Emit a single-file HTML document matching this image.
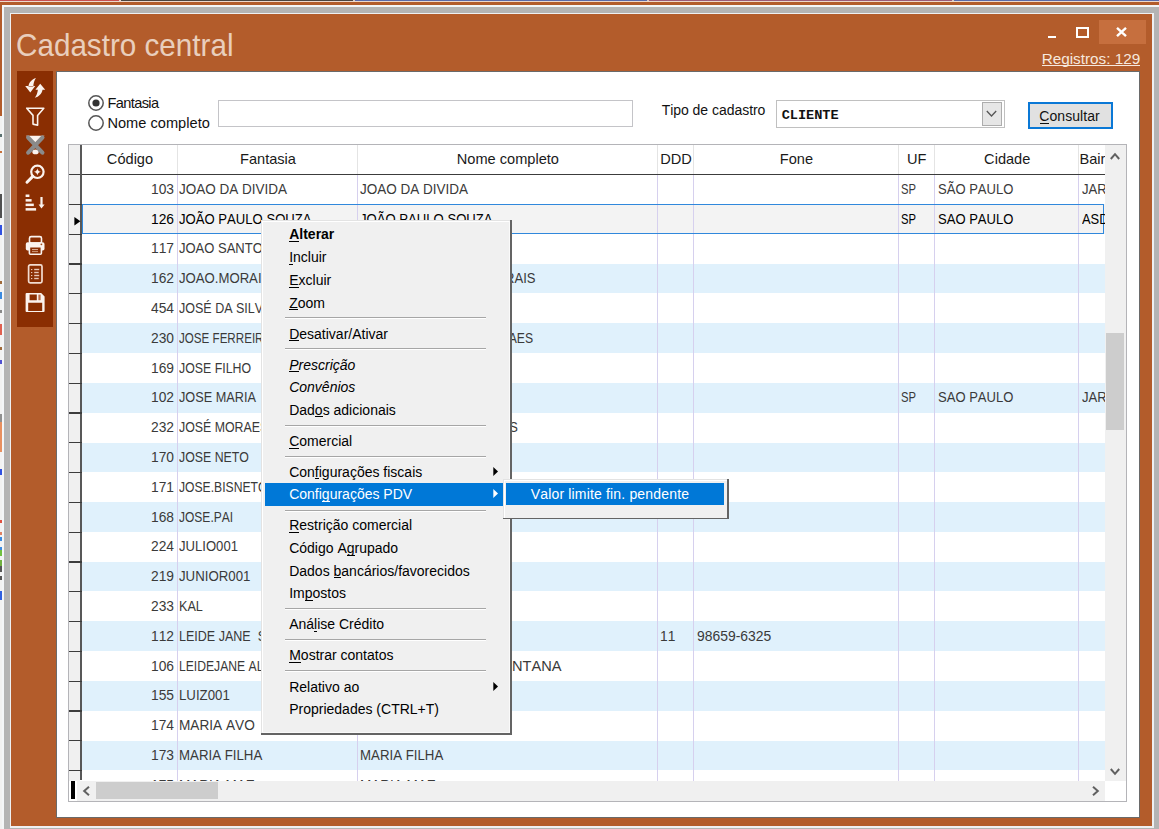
<!DOCTYPE html><html><head><meta charset="utf-8"><style>
html,body{margin:0;padding:0;}
body{width:1159px;height:829px;overflow:hidden;position:relative;background:#b35c2b;font-family:"Liberation Sans",sans-serif;}
.t{position:absolute;white-space:pre;font-kerning:none;}
.r{position:absolute;box-sizing:border-box;}
svg{position:absolute;overflow:visible;}
</style></head><body>
<div class="r" style="left:0.00px;top:0.00px;width:119.00px;height:1.00px;background:#c84f50;"></div>
<div class="r" style="left:119.00px;top:0.00px;width:2.00px;height:1.00px;background:#e8d0c8;"></div>
<div class="r" style="left:121.00px;top:0.00px;width:232.00px;height:1.00px;background:#4a4440;"></div>
<div class="r" style="left:353.00px;top:0.00px;width:2.00px;height:1.00px;background:#d8c8c0;"></div>
<div class="r" style="left:355.00px;top:0.00px;width:292.00px;height:1.00px;background:#5a6aa8;"></div>
<div class="r" style="left:647.00px;top:0.00px;width:2.00px;height:1.00px;background:#d8c8c0;"></div>
<div class="r" style="left:649.00px;top:0.00px;width:303.00px;height:1.00px;background:#9a5a78;"></div>
<div class="r" style="left:952.00px;top:0.00px;width:2.00px;height:1.00px;background:#d8c8c0;"></div>
<div class="r" style="left:954.00px;top:0.00px;width:205.00px;height:1.00px;background:#5a6aa8;"></div>
<div class="r" style="left:0.00px;top:1.00px;width:1159.00px;height:1.00px;background:#eed8cc;"></div>
<div class="r" style="left:0.00px;top:116.00px;width:2.20px;height:713.00px;background:#f2f2f2;"></div>
<div class="r" style="left:0.00px;top:134.00px;width:1.80px;height:3.00px;background:#5a7070;"></div>
<div class="r" style="left:0.00px;top:151.00px;width:1.80px;height:2.00px;background:#c8703a;"></div>
<div class="r" style="left:0.00px;top:194.00px;width:1.80px;height:24.00px;background:#505050;"></div>
<div class="r" style="left:0.00px;top:225.00px;width:1.80px;height:10.00px;background:#3050e0;"></div>
<div class="r" style="left:0.00px;top:281.00px;width:1.80px;height:3.00px;background:#a06a3a;"></div>
<div class="r" style="left:0.00px;top:292.00px;width:1.80px;height:7.00px;background:#3a8ae0;"></div>
<div class="r" style="left:0.00px;top:310.00px;width:1.80px;height:3.00px;background:#888888;"></div>
<div class="r" style="left:0.00px;top:324.00px;width:1.80px;height:11.00px;background:#e06050;"></div>
<div class="r" style="left:0.00px;top:347.00px;width:1.80px;height:3.00px;background:#a06a3a;"></div>
<div class="r" style="left:0.00px;top:360.00px;width:1.80px;height:4.00px;background:#5050d0;"></div>
<div class="r" style="left:0.00px;top:414.00px;width:1.80px;height:8.00px;background:#909090;"></div>
<div class="r" style="left:0.00px;top:422.00px;width:1.80px;height:30.00px;background:#e89060;"></div>
<div class="r" style="left:0.00px;top:469.00px;width:1.80px;height:6.00px;background:#3050e0;"></div>
<div class="r" style="left:0.00px;top:520.00px;width:1.80px;height:3.00px;background:#e05040;"></div>
<div class="r" style="left:0.00px;top:532.00px;width:1.80px;height:3.00px;background:#e08060;"></div>
<div class="r" style="left:0.00px;top:537.00px;width:1.80px;height:4.00px;background:#3a8ae0;"></div>
<div class="r" style="left:0.00px;top:547.00px;width:1.80px;height:6.00px;background:#3a8ae0;"></div>
<div class="r" style="left:0.00px;top:550.00px;width:1.80px;height:6.00px;background:#70c040;"></div>
<div class="r" style="left:0.00px;top:560.00px;width:1.80px;height:7.00px;background:#70b040;"></div>
<div class="r" style="left:0.00px;top:566.00px;width:1.80px;height:6.00px;background:#555555;"></div>
<div class="r" style="left:0.00px;top:576.00px;width:1.80px;height:4.00px;background:#555555;"></div>
<div class="r" style="left:0.00px;top:591.00px;width:1.80px;height:9.00px;background:#3060e0;"></div>
<div class="r" style="left:2.00px;top:4.50px;width:1157.00px;height:824.50px;background:#f4f6f8;"></div>
<div class="r" style="left:4.00px;top:7.00px;width:1155.00px;height:822.00px;background:#b4b4b4;"></div>
<div class="r" style="left:10.00px;top:13.00px;width:1144.00px;height:814.50px;background:#eef0f2;"></div>
<div class="r" style="left:11.00px;top:14.00px;width:1141.00px;height:812.00px;background:#b35c2b;"></div>
<div class="t" style="left:16.40px;top:28.71px;font-size:32.00px;line-height:32.00px;color:#f6e8de;transform:scaleX(0.9264);transform-origin:0 0;font-family:'Liberation Sans', sans-serif;opacity:0.82;">Cadastro central</div>
<div class="r" style="left:1099.00px;top:20.00px;width:47.00px;height:23.50px;background:#c66f3e;"></div>
<div class="r" style="left:1047.50px;top:35.50px;width:8.50px;height:2.30px;background:#ffffff;"></div>
<div class="r" style="left:1076.00px;top:27.20px;width:13.00px;height:10.80px;border:2.2px solid #fff;"></div>
<svg style="left:1116px;top:27px" width="11" height="10" viewBox="0 0 11 10"><path d="M1 0.8 L10 9.2 M10 0.8 L1 9.2" stroke="#fff" stroke-width="2.4"/></svg>
<div class="t" style="left:1041.70px;top:50.65px;font-size:15.30px;line-height:15.30px;color:#f6e8de;letter-spacing:-0.012px;font-family:'Liberation Sans', sans-serif;">Registros: 129</div>
<div class="r" style="left:1041.70px;top:65.30px;width:98.50px;height:1.10px;background:#f6e8de;"></div>
<div class="r" style="left:17.00px;top:71.00px;width:36.00px;height:256.00px;background:#8a2e02;"></div>
<svg style="left:22.0px;top:74.0px" width="26" height="26" viewBox="0 0 26 26"><path d="M3.2 12.0 L13.2 12.0 L8.3 18.6 Z M13.9 4.0 C9.8 5.2 7.0 8.4 6.4 12.4 L11.3 12.4 C11.5 9.4 12.2 6.5 13.9 4.0 Z" fill="#fbf3ee"/><path d="M13.4 15.8 L23.2 15.8 L18.2 9.8 Z M12.8 23.8 C16.9 22.8 19.9 19.6 20.6 15.5 L15.9 15.5 C15.6 18.6 14.6 21.4 12.8 23.8 Z" fill="#fbf3ee"/></svg>
<svg style="left:22.0px;top:103.0px" width="26" height="26" viewBox="0 0 26 26"><path d="M4.7 5.2 H21.8 L15.6 12.4 V22.2 L11 21.1 V12.4 Z" fill="none" stroke="#fbf3ee" stroke-width="1.6" stroke-linejoin="round"/></svg>
<svg style="left:22.0px;top:132.0px" width="26" height="26" viewBox="0 0 26 26"><path d="M3.8 3.8 H22.6 L13.3 10.5 Z" fill="#fbf3ee"/><ellipse cx="13.5" cy="19.9" rx="3.2" ry="2.4" fill="#fbf3ee"/><path d="M6.2 5.6 L20.4 20.6 M20.4 5.6 L6.2 20.6" stroke="#8a8a8a" stroke-width="4.2" stroke-linecap="round"/></svg>
<svg style="left:22.0px;top:161.0px" width="26" height="26" viewBox="0 0 26 26"><circle cx="15.4" cy="10.8" r="6.2" fill="none" stroke="#fbf3ee" stroke-width="2.2"/><path d="M15.4 7.2 Q15.9 10.3 19 10.8 Q15.9 11.3 15.4 14.4 Q14.9 11.3 11.8 10.8 Q14.9 10.3 15.4 7.2 Z" fill="#fbf3ee"/><path d="M10.8 15.4 L5.0 21.2" stroke="#fbf3ee" stroke-width="3" stroke-linecap="round"/></svg>
<svg style="left:22.0px;top:190.0px" width="26" height="26" viewBox="0 0 26 26"><rect x="3.6" y="4.5" width="3.8" height="2.5" fill="#fbf3ee"/><rect x="3.6" y="9.1" width="6" height="2.5" fill="#fbf3ee"/><rect x="3.6" y="13.6" width="8.2" height="2.5" fill="#fbf3ee"/><rect x="3.6" y="18.1" width="10.5" height="2.5" fill="#fbf3ee"/><rect x="18.4" y="7" width="2.2" height="8" fill="#fbf3ee"/><path d="M16.6 14.6 L22.6 14.6 L19.5 18.4 Z" fill="#fbf3ee"/></svg>
<svg style="left:22.0px;top:232.0px" width="26" height="26" viewBox="0 0 26 26"><rect x="7.5" y="4.6" width="12" height="6.5" rx="1.6" fill="none" stroke="#fbf3ee" stroke-width="1.6"/><rect x="3.8" y="10.3" width="18.7" height="8.2" rx="1.8" fill="#fbf3ee"/><rect x="7.4" y="14.8" width="12" height="7.4" rx="1" fill="#8a2e02" stroke="#fbf3ee" stroke-width="1.6"/><rect x="10" y="17" width="6" height="1.1" fill="#d8a890"/><rect x="10" y="19" width="6" height="1.1" fill="#c89070"/><circle cx="19.4" cy="12.3" r="0.9" fill="#a04818"/></svg>
<svg style="left:22.0px;top:261.0px" width="26" height="26" viewBox="0 0 26 26"><rect x="6.6" y="3.9" width="13.4" height="18" rx="1.6" fill="none" stroke="#f2dcd0" stroke-width="1.7"/><g fill="#e8c8b8"><rect x="9" y="8" width="1.3" height="1.1"/><rect x="9" y="11" width="1.3" height="1.1"/><rect x="9" y="14" width="1.3" height="1.1"/><rect x="9" y="17" width="1.3" height="1.1"/><rect x="12.2" y="7.8" width="5" height="1.4"/><rect x="12.2" y="10.8" width="4.5" height="1.4"/><rect x="12.2" y="13.8" width="5" height="1.4"/><rect x="12.2" y="16.8" width="4.5" height="1.4"/></g></svg>
<svg style="left:22.0px;top:290.0px" width="26" height="26" viewBox="0 0 26 26"><path fill-rule="evenodd" d="M4.6 3 H19.2 L22.6 6.4 V21 Q22.6 21.9 21.7 21.9 H4.5 Q3.6 21.9 3.6 21 V4 Q3.6 3 4.6 3 Z M7.6 4.6 H14.8 V10.2 H7.6 Z M6.2 12.8 H20.2 V21 H6.2 Z" fill="#fbf3ee"/><rect x="16.4" y="4.6" width="2.2" height="5.6" fill="#b86a48"/></svg>
<div class="r" style="left:56.00px;top:71.00px;width:1084.00px;height:746.50px;background:#ffffff;border:1px solid #6a6a6a;"></div>
<svg style="left:88px;top:95px" width="16" height="16" viewBox="0 0 16 16"><circle cx="8" cy="8" r="7.2" fill="#fff" stroke="#555" stroke-width="1.5"/><circle cx="8" cy="8" r="3.6" fill="#333"/></svg>
<svg style="left:88px;top:115px" width="16" height="16" viewBox="0 0 16 16"><circle cx="8" cy="8" r="7.2" fill="#fff" stroke="#555" stroke-width="1.5"/></svg>
<div class="t" style="left:107.60px;top:95.84px;font-size:14.60px;line-height:14.60px;color:#111;letter-spacing:-0.643px;font-family:'Liberation Sans', sans-serif;">Fantasia</div>
<div class="t" style="left:107.40px;top:116.04px;font-size:14.60px;line-height:14.60px;color:#111;letter-spacing:0.021px;font-family:'Liberation Sans', sans-serif;">Nome completo</div>
<div class="r" style="left:218.00px;top:100.00px;width:414.50px;height:27.00px;background:#fff;border:1px solid #c4c4c8;"></div>
<div class="t" style="left:661.70px;top:102.65px;font-size:14.00px;line-height:14.00px;color:#111;letter-spacing:-0.039px;font-family:'Liberation Sans', sans-serif;">Tipo de cadastro</div>
<div class="r" style="left:776.00px;top:100.30px;width:228.50px;height:27.70px;background:#fff;border:1px solid #c0c0c0;"></div>
<div class="t" style="left:781.70px;top:108.68px;font-size:13.60px;line-height:13.60px;color:#111;font-weight:bold;letter-spacing:-0.022px;font-family:'Liberation Mono', monospace;">CLIENTE</div>
<div class="r" style="left:982.00px;top:102.40px;width:20.00px;height:23.40px;background:#e6e6e6;border:1px solid #adadad;"></div>
<svg style="left:986px;top:110px" width="11" height="8" viewBox="0 0 11 8"><path d="M0.8 1 L5.5 6 L10.2 1" stroke="#555" stroke-width="1.3" fill="none"/></svg>
<div class="r" style="left:1028.30px;top:102.40px;width:84.70px;height:26.80px;background:#e1e1e1;border:2px solid #0a78d6;"></div>
<div class="t" style="left:1039.20px;top:109.15px;font-size:14.00px;line-height:14.00px;color:#111;letter-spacing:0.085px;font-family:'Liberation Sans', sans-serif;">Consultar</div>
<div class="r" style="left:1039.50px;top:122.80px;width:9.50px;height:1.20px;background:#111;"></div>
<div class="r" style="left:68.00px;top:144.00px;width:1059.00px;height:658.00px;background:#ffffff;border:1px solid #b4b4b8;"></div>
<div class="r" style="left:81.50px;top:204.10px;width:1023.00px;height:29.80px;background:#e0f1fc;"></div>
<div class="r" style="left:81.50px;top:263.70px;width:1023.00px;height:29.80px;background:#e0f1fc;"></div>
<div class="r" style="left:81.50px;top:323.30px;width:1023.00px;height:29.80px;background:#e0f1fc;"></div>
<div class="r" style="left:81.50px;top:382.90px;width:1023.00px;height:29.80px;background:#e0f1fc;"></div>
<div class="r" style="left:81.50px;top:442.50px;width:1023.00px;height:29.80px;background:#e0f1fc;"></div>
<div class="r" style="left:81.50px;top:502.10px;width:1023.00px;height:29.80px;background:#e0f1fc;"></div>
<div class="r" style="left:81.50px;top:561.70px;width:1023.00px;height:29.80px;background:#e0f1fc;"></div>
<div class="r" style="left:81.50px;top:621.30px;width:1023.00px;height:29.80px;background:#e0f1fc;"></div>
<div class="r" style="left:81.50px;top:680.90px;width:1023.00px;height:29.80px;background:#e0f1fc;"></div>
<div class="r" style="left:81.50px;top:740.50px;width:1023.00px;height:29.80px;background:#e0f1fc;"></div>
<div class="r" style="left:81.50px;top:204.30px;width:1023.00px;height:29.80px;background:#f3f3f3;"></div>
<div class="r" style="left:177.00px;top:145.00px;width:1.00px;height:29.30px;background:#e4e4e4;"></div>
<div class="r" style="left:177.00px;top:175.30px;width:1.00px;height:605.70px;background:#d6d0ee;"></div>
<div class="r" style="left:357.00px;top:145.00px;width:1.00px;height:29.30px;background:#e4e4e4;"></div>
<div class="r" style="left:357.00px;top:175.30px;width:1.00px;height:605.70px;background:#d6d0ee;"></div>
<div class="r" style="left:656.80px;top:145.00px;width:1.00px;height:29.30px;background:#e4e4e4;"></div>
<div class="r" style="left:656.80px;top:175.30px;width:1.00px;height:605.70px;background:#d6d0ee;"></div>
<div class="r" style="left:693.40px;top:145.00px;width:1.00px;height:29.30px;background:#e4e4e4;"></div>
<div class="r" style="left:693.40px;top:175.30px;width:1.00px;height:605.70px;background:#d6d0ee;"></div>
<div class="r" style="left:897.50px;top:145.00px;width:1.00px;height:29.30px;background:#e4e4e4;"></div>
<div class="r" style="left:897.50px;top:175.30px;width:1.00px;height:605.70px;background:#d6d0ee;"></div>
<div class="r" style="left:934.10px;top:145.00px;width:1.00px;height:29.30px;background:#e4e4e4;"></div>
<div class="r" style="left:934.10px;top:175.30px;width:1.00px;height:605.70px;background:#d6d0ee;"></div>
<div class="r" style="left:1078.40px;top:145.00px;width:1.00px;height:29.30px;background:#e4e4e4;"></div>
<div class="r" style="left:1078.40px;top:175.30px;width:1.00px;height:605.70px;background:#d6d0ee;"></div>
<div class="r" style="left:69.00px;top:145.00px;width:11.30px;height:636.00px;background:#f0f0f0;"></div>
<div class="r" style="left:69.00px;top:174.00px;width:1035.50px;height:1.40px;background:#3c3c3c;"></div>
<div class="r" style="left:80.40px;top:145.00px;width:1.40px;height:635.20px;background:#585858;"></div>
<div class="r" style="left:69.00px;top:203.80px;width:12.50px;height:1.30px;background:#3c3c3c;"></div>
<div class="r" style="left:69.00px;top:233.60px;width:12.50px;height:1.30px;background:#3c3c3c;"></div>
<div class="r" style="left:69.00px;top:263.40px;width:12.50px;height:1.30px;background:#3c3c3c;"></div>
<div class="r" style="left:69.00px;top:293.20px;width:12.50px;height:1.30px;background:#3c3c3c;"></div>
<div class="r" style="left:69.00px;top:323.00px;width:12.50px;height:1.30px;background:#3c3c3c;"></div>
<div class="r" style="left:69.00px;top:352.80px;width:12.50px;height:1.30px;background:#3c3c3c;"></div>
<div class="r" style="left:69.00px;top:382.60px;width:12.50px;height:1.30px;background:#3c3c3c;"></div>
<div class="r" style="left:69.00px;top:412.40px;width:12.50px;height:1.30px;background:#3c3c3c;"></div>
<div class="r" style="left:69.00px;top:442.20px;width:12.50px;height:1.30px;background:#3c3c3c;"></div>
<div class="r" style="left:69.00px;top:472.00px;width:12.50px;height:1.30px;background:#3c3c3c;"></div>
<div class="r" style="left:69.00px;top:501.80px;width:12.50px;height:1.30px;background:#3c3c3c;"></div>
<div class="r" style="left:69.00px;top:531.60px;width:12.50px;height:1.30px;background:#3c3c3c;"></div>
<div class="r" style="left:69.00px;top:561.40px;width:12.50px;height:1.30px;background:#3c3c3c;"></div>
<div class="r" style="left:69.00px;top:591.20px;width:12.50px;height:1.30px;background:#3c3c3c;"></div>
<div class="r" style="left:69.00px;top:621.00px;width:12.50px;height:1.30px;background:#3c3c3c;"></div>
<div class="r" style="left:69.00px;top:650.80px;width:12.50px;height:1.30px;background:#3c3c3c;"></div>
<div class="r" style="left:69.00px;top:680.60px;width:12.50px;height:1.30px;background:#3c3c3c;"></div>
<div class="r" style="left:69.00px;top:710.40px;width:12.50px;height:1.30px;background:#3c3c3c;"></div>
<div class="r" style="left:69.00px;top:740.20px;width:12.50px;height:1.30px;background:#3c3c3c;"></div>
<div class="r" style="left:69.00px;top:770.00px;width:12.50px;height:1.30px;background:#3c3c3c;"></div>
<div class="r" style="left:81.60px;top:204.20px;width:1022.90px;height:29.90px;border:1.5px solid #3088dc;"></div>
<svg style="left:74px;top:216.5px" width="7" height="9" viewBox="0 0 7 9"><path d="M0.4 0 L6.4 4.3 L0.4 8.6 Z" fill="#000"/></svg>
<div class="t" style="left:106.87px;top:152.04px;font-size:14.60px;line-height:14.60px;color:#1a1a1a;font-family:'Liberation Sans', sans-serif;">Código</div>
<div class="t" style="left:240.00px;top:152.04px;font-size:14.60px;line-height:14.60px;color:#1a1a1a;font-family:'Liberation Sans', sans-serif;">Fantasia</div>
<div class="t" style="left:456.78px;top:152.04px;font-size:14.60px;line-height:14.60px;color:#1a1a1a;font-family:'Liberation Sans', sans-serif;">Nome completo</div>
<div class="t" style="left:660.28px;top:152.04px;font-size:14.60px;line-height:14.60px;color:#1a1a1a;font-family:'Liberation Sans', sans-serif;">DDD</div>
<div class="t" style="left:779.81px;top:152.04px;font-size:14.60px;line-height:14.60px;color:#1a1a1a;font-family:'Liberation Sans', sans-serif;">Fone</div>
<div class="t" style="left:907.07px;top:152.04px;font-size:14.60px;line-height:14.60px;color:#1a1a1a;font-family:'Liberation Sans', sans-serif;">UF</div>
<div class="t" style="left:984.12px;top:152.04px;font-size:14.60px;line-height:14.60px;color:#1a1a1a;font-family:'Liberation Sans', sans-serif;">Cidade</div>
<div class="r" style="left:0;top:0;width:1104.50px;height:829.00px;overflow:hidden;"><div class="t" style="left:1079.50px;top:152.04px;font-size:14.60px;line-height:14.60px;color:#1a1a1a;font-family:'Liberation Sans', sans-serif;">Bairro</div></div>
<div class="t" style="left:151.38px;top:181.75px;font-size:14.00px;line-height:14.00px;color:#3a3a3a;transform:scaleX(0.9853);transform-origin:0 0;font-family:'Liberation Sans', sans-serif;">103</div>
<div class="t" style="left:179.30px;top:181.75px;font-size:14.00px;line-height:14.00px;color:#3a3a3a;transform:scaleX(0.9648);transform-origin:0 0;font-family:'Liberation Sans', sans-serif;">JOAO DA DIVIDA</div>
<div class="t" style="left:360.00px;top:181.75px;font-size:14.00px;line-height:14.00px;color:#3a3a3a;transform:scaleX(0.9648);transform-origin:0 0;font-family:'Liberation Sans', sans-serif;">JOAO DA DIVIDA</div>
<div class="t" style="left:901.40px;top:181.75px;font-size:14.00px;line-height:14.00px;color:#3a3a3a;transform:scaleX(0.8040);transform-origin:0 0;font-family:'Liberation Sans', sans-serif;">SP</div>
<div class="t" style="left:937.80px;top:181.75px;font-size:14.00px;line-height:14.00px;color:#3a3a3a;transform:scaleX(0.9307);transform-origin:0 0;font-family:'Liberation Sans', sans-serif;">SÃO PAULO</div>
<div class="r" style="left:0;top:0;width:1104.50px;height:829.00px;overflow:hidden;"><div class="t" style="left:1081.70px;top:181.75px;font-size:14.00px;line-height:14.00px;color:#3a3a3a;transform:scaleX(0.9367);transform-origin:0 0;font-family:'Liberation Sans', sans-serif;">JARDIM</div></div>
<div class="t" style="left:151.38px;top:211.55px;font-size:14.00px;line-height:14.00px;color:#000;transform:scaleX(0.9853);transform-origin:0 0;font-family:'Liberation Sans', sans-serif;">126</div>
<div class="t" style="left:179.30px;top:211.55px;font-size:14.00px;line-height:14.00px;color:#000;transform:scaleX(0.9362);transform-origin:0 0;font-family:'Liberation Sans', sans-serif;">JOÃO PAULO SOUZA</div>
<div class="t" style="left:360.00px;top:211.55px;font-size:14.00px;line-height:14.00px;color:#000;transform:scaleX(0.9362);transform-origin:0 0;font-family:'Liberation Sans', sans-serif;">JOÃO PAULO SOUZA</div>
<div class="t" style="left:901.40px;top:211.55px;font-size:14.00px;line-height:14.00px;color:#000;transform:scaleX(0.8040);transform-origin:0 0;font-family:'Liberation Sans', sans-serif;">SP</div>
<div class="t" style="left:937.80px;top:211.55px;font-size:14.00px;line-height:14.00px;color:#000;transform:scaleX(0.9307);transform-origin:0 0;font-family:'Liberation Sans', sans-serif;">SAO PAULO</div>
<div class="r" style="left:0;top:0;width:1104.50px;height:829.00px;overflow:hidden;"><div class="t" style="left:1081.70px;top:211.55px;font-size:14.00px;line-height:14.00px;color:#000;transform:scaleX(0.9214);transform-origin:0 0;font-family:'Liberation Sans', sans-serif;">ASDASD</div></div>
<div class="t" style="left:151.38px;top:241.35px;font-size:14.00px;line-height:14.00px;color:#3a3a3a;transform:scaleX(0.9853);transform-origin:0 0;font-family:'Liberation Sans', sans-serif;">117</div>
<div class="t" style="left:179.30px;top:241.35px;font-size:14.00px;line-height:14.00px;color:#3a3a3a;transform:scaleX(0.9287);transform-origin:0 0;font-family:'Liberation Sans', sans-serif;">JOAO SANTOS</div>
<div class="t" style="left:360.00px;top:241.35px;font-size:14.00px;line-height:14.00px;color:#3a3a3a;transform:scaleX(0.9287);transform-origin:0 0;font-family:'Liberation Sans', sans-serif;">JOAO SANTOS</div>
<div class="t" style="left:151.38px;top:271.15px;font-size:14.00px;line-height:14.00px;color:#3a3a3a;transform:scaleX(0.9853);transform-origin:0 0;font-family:'Liberation Sans', sans-serif;">162</div>
<div class="t" style="left:179.30px;top:271.15px;font-size:14.00px;line-height:14.00px;color:#3a3a3a;transform:scaleX(0.9391);transform-origin:0 0;font-family:'Liberation Sans', sans-serif;">JOAO.MORAIS</div>
<div class="t" style="left:422.82px;top:271.15px;font-size:14.00px;line-height:14.00px;color:#3a3a3a;transform:scaleX(0.9329);transform-origin:0 0;font-family:'Liberation Sans', sans-serif;">JOAO DE MORAIS</div>
<div class="t" style="left:151.38px;top:300.95px;font-size:14.00px;line-height:14.00px;color:#3a3a3a;transform:scaleX(0.9853);transform-origin:0 0;font-family:'Liberation Sans', sans-serif;">454</div>
<div class="t" style="left:179.30px;top:300.95px;font-size:14.00px;line-height:14.00px;color:#3a3a3a;transform:scaleX(0.8935);transform-origin:0 0;font-family:'Liberation Sans', sans-serif;">JOSÉ DA SILVA</div>
<div class="t" style="left:360.00px;top:300.95px;font-size:14.00px;line-height:14.00px;color:#3a3a3a;transform:scaleX(0.8935);transform-origin:0 0;font-family:'Liberation Sans', sans-serif;">JOSÉ DA SILVA</div>
<div class="t" style="left:151.38px;top:330.75px;font-size:14.00px;line-height:14.00px;color:#3a3a3a;transform:scaleX(0.9853);transform-origin:0 0;font-family:'Liberation Sans', sans-serif;">230</div>
<div class="t" style="left:179.30px;top:330.75px;font-size:14.00px;line-height:14.00px;color:#3a3a3a;transform:scaleX(0.8291);transform-origin:0 0;font-family:'Liberation Sans', sans-serif;">JOSE FERREIRA</div>
<div class="t" style="left:360.01px;top:330.75px;font-size:14.00px;line-height:14.00px;color:#3a3a3a;transform:scaleX(0.8687);transform-origin:0 0;font-family:'Liberation Sans', sans-serif;">JOSE FERREIRA GUIMARAES</div>
<div class="t" style="left:151.38px;top:360.55px;font-size:14.00px;line-height:14.00px;color:#3a3a3a;transform:scaleX(0.9853);transform-origin:0 0;font-family:'Liberation Sans', sans-serif;">169</div>
<div class="t" style="left:179.30px;top:360.55px;font-size:14.00px;line-height:14.00px;color:#3a3a3a;transform:scaleX(0.8822);transform-origin:0 0;font-family:'Liberation Sans', sans-serif;">JOSE FILHO</div>
<div class="t" style="left:360.00px;top:360.55px;font-size:14.00px;line-height:14.00px;color:#3a3a3a;transform:scaleX(0.8822);transform-origin:0 0;font-family:'Liberation Sans', sans-serif;">JOSE FILHO</div>
<div class="t" style="left:151.38px;top:390.35px;font-size:14.00px;line-height:14.00px;color:#3a3a3a;transform:scaleX(0.9853);transform-origin:0 0;font-family:'Liberation Sans', sans-serif;">102</div>
<div class="t" style="left:179.30px;top:390.35px;font-size:14.00px;line-height:14.00px;color:#3a3a3a;transform:scaleX(0.9077);transform-origin:0 0;font-family:'Liberation Sans', sans-serif;">JOSE MARIA</div>
<div class="t" style="left:360.00px;top:390.35px;font-size:14.00px;line-height:14.00px;color:#3a3a3a;transform:scaleX(0.9077);transform-origin:0 0;font-family:'Liberation Sans', sans-serif;">JOSE MARIA</div>
<div class="t" style="left:901.40px;top:390.35px;font-size:14.00px;line-height:14.00px;color:#3a3a3a;transform:scaleX(0.8040);transform-origin:0 0;font-family:'Liberation Sans', sans-serif;">SP</div>
<div class="t" style="left:937.80px;top:390.35px;font-size:14.00px;line-height:14.00px;color:#3a3a3a;transform:scaleX(0.9307);transform-origin:0 0;font-family:'Liberation Sans', sans-serif;">SAO PAULO</div>
<div class="r" style="left:0;top:0;width:1104.50px;height:829.00px;overflow:hidden;"><div class="t" style="left:1081.70px;top:390.35px;font-size:14.00px;line-height:14.00px;color:#3a3a3a;transform:scaleX(0.9367);transform-origin:0 0;font-family:'Liberation Sans', sans-serif;">JARDIM</div></div>
<div class="t" style="left:151.38px;top:420.15px;font-size:14.00px;line-height:14.00px;color:#3a3a3a;transform:scaleX(0.9853);transform-origin:0 0;font-family:'Liberation Sans', sans-serif;">232</div>
<div class="t" style="left:179.30px;top:420.15px;font-size:14.00px;line-height:14.00px;color:#3a3a3a;transform:scaleX(0.8827);transform-origin:0 0;font-family:'Liberation Sans', sans-serif;">JOSÉ MORAES</div>
<div class="t" style="left:346.13px;top:420.15px;font-size:14.00px;line-height:14.00px;color:#3a3a3a;transform:scaleX(0.8908);transform-origin:0 0;font-family:'Liberation Sans', sans-serif;">JOSÉ DE OLIVEIRA MORAES</div>
<div class="t" style="left:151.38px;top:449.95px;font-size:14.00px;line-height:14.00px;color:#3a3a3a;transform:scaleX(0.9853);transform-origin:0 0;font-family:'Liberation Sans', sans-serif;">170</div>
<div class="t" style="left:179.30px;top:449.95px;font-size:14.00px;line-height:14.00px;color:#3a3a3a;transform:scaleX(0.8808);transform-origin:0 0;font-family:'Liberation Sans', sans-serif;">JOSE NETO</div>
<div class="t" style="left:360.00px;top:449.95px;font-size:14.00px;line-height:14.00px;color:#3a3a3a;transform:scaleX(0.8808);transform-origin:0 0;font-family:'Liberation Sans', sans-serif;">JOSE NETO</div>
<div class="t" style="left:151.38px;top:479.75px;font-size:14.00px;line-height:14.00px;color:#3a3a3a;transform:scaleX(0.9853);transform-origin:0 0;font-family:'Liberation Sans', sans-serif;">171</div>
<div class="t" style="left:179.30px;top:479.75px;font-size:14.00px;line-height:14.00px;color:#3a3a3a;transform:scaleX(0.8676);transform-origin:0 0;font-family:'Liberation Sans', sans-serif;">JOSE.BISNETO</div>
<div class="t" style="left:360.00px;top:479.75px;font-size:14.00px;line-height:14.00px;color:#3a3a3a;transform:scaleX(0.8717);transform-origin:0 0;font-family:'Liberation Sans', sans-serif;">JOSE BISNETO</div>
<div class="t" style="left:151.38px;top:509.55px;font-size:14.00px;line-height:14.00px;color:#3a3a3a;transform:scaleX(0.9853);transform-origin:0 0;font-family:'Liberation Sans', sans-serif;">168</div>
<div class="t" style="left:179.30px;top:509.55px;font-size:14.00px;line-height:14.00px;color:#3a3a3a;transform:scaleX(0.8583);transform-origin:0 0;font-family:'Liberation Sans', sans-serif;">JOSE.PAI</div>
<div class="t" style="left:360.00px;top:509.55px;font-size:14.00px;line-height:14.00px;color:#3a3a3a;transform:scaleX(0.8648);transform-origin:0 0;font-family:'Liberation Sans', sans-serif;">JOSE PAI</div>
<div class="t" style="left:151.38px;top:539.35px;font-size:14.00px;line-height:14.00px;color:#3a3a3a;transform:scaleX(0.9853);transform-origin:0 0;font-family:'Liberation Sans', sans-serif;">224</div>
<div class="t" style="left:179.30px;top:539.35px;font-size:14.00px;line-height:14.00px;color:#3a3a3a;transform:scaleX(0.9352);transform-origin:0 0;font-family:'Liberation Sans', sans-serif;">JULIO001</div>
<div class="t" style="left:360.00px;top:539.35px;font-size:14.00px;line-height:14.00px;color:#3a3a3a;transform:scaleX(0.9352);transform-origin:0 0;font-family:'Liberation Sans', sans-serif;">JULIO001</div>
<div class="t" style="left:151.38px;top:569.15px;font-size:14.00px;line-height:14.00px;color:#3a3a3a;transform:scaleX(0.9853);transform-origin:0 0;font-family:'Liberation Sans', sans-serif;">219</div>
<div class="t" style="left:179.30px;top:569.15px;font-size:14.00px;line-height:14.00px;color:#3a3a3a;transform:scaleX(0.9461);transform-origin:0 0;font-family:'Liberation Sans', sans-serif;">JUNIOR001</div>
<div class="t" style="left:360.00px;top:569.15px;font-size:14.00px;line-height:14.00px;color:#3a3a3a;transform:scaleX(0.9461);transform-origin:0 0;font-family:'Liberation Sans', sans-serif;">JUNIOR001</div>
<div class="t" style="left:151.38px;top:598.95px;font-size:14.00px;line-height:14.00px;color:#3a3a3a;transform:scaleX(0.9853);transform-origin:0 0;font-family:'Liberation Sans', sans-serif;">233</div>
<div class="t" style="left:179.30px;top:598.95px;font-size:14.00px;line-height:14.00px;color:#3a3a3a;transform:scaleX(0.9008);transform-origin:0 0;font-family:'Liberation Sans', sans-serif;">KAL</div>
<div class="t" style="left:360.00px;top:598.95px;font-size:14.00px;line-height:14.00px;color:#3a3a3a;transform:scaleX(0.9008);transform-origin:0 0;font-family:'Liberation Sans', sans-serif;">KAL</div>
<div class="t" style="left:151.38px;top:628.75px;font-size:14.00px;line-height:14.00px;color:#3a3a3a;transform:scaleX(0.9853);transform-origin:0 0;font-family:'Liberation Sans', sans-serif;">112</div>
<div class="t" style="left:179.30px;top:628.75px;font-size:14.00px;line-height:14.00px;color:#3a3a3a;transform:scaleX(0.8949);transform-origin:0 0;font-family:'Liberation Sans', sans-serif;">LEIDE JANE  SANTOS</div>
<div class="t" style="left:360.00px;top:628.75px;font-size:14.00px;line-height:14.00px;color:#3a3a3a;transform:scaleX(0.8717);transform-origin:0 0;font-family:'Liberation Sans', sans-serif;">LEIDE JANE</div>
<div class="t" style="left:660.30px;top:628.75px;font-size:14.00px;line-height:14.00px;color:#3a3a3a;transform:scaleX(0.9853);transform-origin:0 0;font-family:'Liberation Sans', sans-serif;">11</div>
<div class="t" style="left:696.50px;top:628.75px;font-size:14.00px;line-height:14.00px;color:#3a3a3a;transform:scaleX(0.9935);transform-origin:0 0;font-family:'Liberation Sans', sans-serif;">98659-6325</div>
<div class="t" style="left:151.38px;top:658.55px;font-size:14.00px;line-height:14.00px;color:#3a3a3a;transform:scaleX(0.9853);transform-origin:0 0;font-family:'Liberation Sans', sans-serif;">106</div>
<div class="t" style="left:179.30px;top:658.55px;font-size:14.00px;line-height:14.00px;color:#3a3a3a;transform:scaleX(0.8681);transform-origin:0 0;font-family:'Liberation Sans', sans-serif;">LEIDEJANE ALVES</div>
<div class="t" style="left:511.50px;top:658.55px;font-size:14.00px;line-height:14.00px;color:#3a3a3a;transform:scaleX(1.0432);transform-origin:0 0;font-family:'Liberation Sans', sans-serif;">NTANA</div>
<div class="t" style="left:151.38px;top:688.35px;font-size:14.00px;line-height:14.00px;color:#3a3a3a;transform:scaleX(0.9853);transform-origin:0 0;font-family:'Liberation Sans', sans-serif;">155</div>
<div class="t" style="left:179.30px;top:688.35px;font-size:14.00px;line-height:14.00px;color:#3a3a3a;transform:scaleX(0.9466);transform-origin:0 0;font-family:'Liberation Sans', sans-serif;">LUIZ001</div>
<div class="t" style="left:360.00px;top:688.35px;font-size:14.00px;line-height:14.00px;color:#3a3a3a;transform:scaleX(0.9466);transform-origin:0 0;font-family:'Liberation Sans', sans-serif;">LUIZ001</div>
<div class="t" style="left:151.38px;top:718.15px;font-size:14.00px;line-height:14.00px;color:#3a3a3a;transform:scaleX(0.9853);transform-origin:0 0;font-family:'Liberation Sans', sans-serif;">174</div>
<div class="t" style="left:179.30px;top:718.15px;font-size:14.00px;line-height:14.00px;color:#3a3a3a;transform:scaleX(0.9737);transform-origin:0 0;font-family:'Liberation Sans', sans-serif;">MARIA AVO</div>
<div class="t" style="left:360.00px;top:718.15px;font-size:14.00px;line-height:14.00px;color:#3a3a3a;transform:scaleX(0.9737);transform-origin:0 0;font-family:'Liberation Sans', sans-serif;">MARIA AVO</div>
<div class="t" style="left:151.38px;top:747.95px;font-size:14.00px;line-height:14.00px;color:#3a3a3a;transform:scaleX(0.9853);transform-origin:0 0;font-family:'Liberation Sans', sans-serif;">173</div>
<div class="t" style="left:179.30px;top:747.95px;font-size:14.00px;line-height:14.00px;color:#3a3a3a;transform:scaleX(0.9474);transform-origin:0 0;font-family:'Liberation Sans', sans-serif;">MARIA FILHA</div>
<div class="t" style="left:360.00px;top:747.95px;font-size:14.00px;line-height:14.00px;color:#3a3a3a;transform:scaleX(0.9474);transform-origin:0 0;font-family:'Liberation Sans', sans-serif;">MARIA FILHA</div>
<div class="r" style="left:0;top:0;width:1159.00px;height:781.00px;overflow:hidden;"><div class="t" style="left:151.38px;top:777.75px;font-size:14.00px;line-height:14.00px;color:#3a3a3a;transform:scaleX(0.9853);transform-origin:0 0;font-family:'Liberation Sans', sans-serif;">175</div></div>
<div class="r" style="left:0;top:0;width:1159.00px;height:781.00px;overflow:hidden;"><div class="t" style="left:179.30px;top:777.75px;font-size:14.00px;line-height:14.00px;color:#3a3a3a;transform:scaleX(0.9641);transform-origin:0 0;font-family:'Liberation Sans', sans-serif;">MARIA MAE</div></div>
<div class="r" style="left:0;top:0;width:1159.00px;height:781.00px;overflow:hidden;"><div class="t" style="left:360.00px;top:777.75px;font-size:14.00px;line-height:14.00px;color:#3a3a3a;transform:scaleX(0.9641);transform-origin:0 0;font-family:'Liberation Sans', sans-serif;">MARIA MAE</div></div>
<div class="r" style="left:1104.50px;top:145.00px;width:21.50px;height:636.00px;background:#f0f0f0;"></div>
<div class="r" style="left:1106.00px;top:333.20px;width:18.00px;height:96.80px;background:#cdcdcd;"></div>
<svg style="left:1110px;top:152px" width="10" height="8" viewBox="0 0 10 8"><path d="M0.8 7 L5 2.2 L9.2 7" stroke="#606060" stroke-width="2" fill="none"/></svg>
<svg style="left:1110px;top:768px" width="10" height="8" viewBox="0 0 10 8"><path d="M0.8 1 L5 5.8 L9.2 1" stroke="#606060" stroke-width="2" fill="none"/></svg>
<div class="r" style="left:69.00px;top:781.00px;width:1035.50px;height:20.00px;background:#f0f0f0;"></div>
<div class="r" style="left:69.00px;top:781.00px;width:8.00px;height:20.00px;background:#ffffff;"></div>
<div class="r" style="left:71.00px;top:780.80px;width:4.40px;height:18.60px;background:#000;"></div>
<div class="r" style="left:95.80px;top:782.00px;width:122.60px;height:17.00px;background:#cdcdcd;"></div>
<svg style="left:81.5px;top:786px" width="8" height="10" viewBox="0 0 8 10"><path d="M7 0.8 L2.2 5 L7 9.2" stroke="#606060" stroke-width="2" fill="none"/></svg>
<svg style="left:1092px;top:786px" width="8" height="10" viewBox="0 0 8 10"><path d="M1 0.8 L5.8 5 L1 9.2" stroke="#606060" stroke-width="2" fill="none"/></svg>
<div class="r" style="left:1104.50px;top:781.00px;width:21.50px;height:20.00px;background:#ffffff;"></div>
<div class="r" style="left:261.40px;top:219.70px;width:250.60px;height:515.30px;background:#f0f0f0;"></div>
<div class="r" style="left:261.40px;top:219.70px;width:250.60px;height:1.00px;background:#e3e3e3;"></div>
<div class="r" style="left:261.40px;top:219.70px;width:1.00px;height:515.30px;background:#e3e3e3;"></div>
<div class="r" style="left:262.40px;top:220.70px;width:248.10px;height:1.00px;background:#ffffff;"></div>
<div class="r" style="left:262.40px;top:220.70px;width:1.00px;height:512.80px;background:#ffffff;"></div>
<div class="r" style="left:510.20px;top:219.70px;width:1.80px;height:515.30px;background:#646464;"></div>
<div class="r" style="left:261.40px;top:733.20px;width:250.60px;height:1.80px;background:#646464;"></div>
<div class="r" style="left:509.20px;top:220.70px;width:1.00px;height:512.50px;background:#fafafa;"></div>
<div class="r" style="left:262.40px;top:732.20px;width:247.80px;height:1.00px;background:#fafafa;"></div>
<div class="r" style="left:264.50px;top:483.00px;width:238.90px;height:22.60px;background:#0078d7;"></div>
<div class="t" style="left:289.20px;top:227.45px;font-size:14.00px;line-height:14.00px;color:#000000;font-weight:bold;font-family:'Liberation Sans', sans-serif;">Alterar</div>
<div class="r" style="left:289.20px;top:240.90px;width:10.11px;height:1.10px;background:#000000;"></div>
<div class="t" style="left:289.20px;top:250.25px;font-size:14.00px;line-height:14.00px;color:#000000;font-family:'Liberation Sans', sans-serif;">Incluir</div>
<div class="r" style="left:289.20px;top:263.70px;width:3.89px;height:1.10px;background:#000000;"></div>
<div class="t" style="left:289.20px;top:273.05px;font-size:14.00px;line-height:14.00px;color:#000000;font-family:'Liberation Sans', sans-serif;">Excluir</div>
<div class="r" style="left:289.20px;top:286.50px;width:9.34px;height:1.10px;background:#000000;"></div>
<div class="t" style="left:289.20px;top:295.85px;font-size:14.00px;line-height:14.00px;color:#000000;font-family:'Liberation Sans', sans-serif;">Zoom</div>
<div class="r" style="left:289.20px;top:309.30px;width:8.55px;height:1.10px;background:#000000;"></div>
<div class="r" style="left:285.20px;top:317.00px;width:200.80px;height:1.00px;background:#a6a6a6;"></div>
<div class="r" style="left:285.20px;top:318.00px;width:200.80px;height:1.00px;background:#ffffff;"></div>
<div class="t" style="left:289.20px;top:326.85px;font-size:14.00px;line-height:14.00px;color:#000000;font-family:'Liberation Sans', sans-serif;">Desativar/Ativar</div>
<div class="r" style="left:289.20px;top:340.30px;width:10.11px;height:1.10px;background:#000000;"></div>
<div class="r" style="left:285.20px;top:347.90px;width:200.80px;height:1.00px;background:#a6a6a6;"></div>
<div class="r" style="left:285.20px;top:348.90px;width:200.80px;height:1.00px;background:#ffffff;"></div>
<div class="t" style="left:289.20px;top:357.75px;font-size:14.00px;line-height:14.00px;color:#000000;font-style:italic;font-family:'Liberation Sans', sans-serif;">Prescrição</div>
<div class="r" style="left:289.20px;top:371.20px;width:9.34px;height:1.10px;background:#000000;"></div>
<div class="t" style="left:289.20px;top:379.95px;font-size:14.00px;line-height:14.00px;color:#000000;font-style:italic;font-family:'Liberation Sans', sans-serif;">Convênios</div>
<div class="t" style="left:289.20px;top:402.75px;font-size:14.00px;line-height:14.00px;color:#000000;font-family:'Liberation Sans', sans-serif;">Dados adicionais</div>
<div class="r" style="left:314.88px;top:416.20px;width:7.79px;height:1.10px;background:#000000;"></div>
<div class="r" style="left:285.20px;top:424.50px;width:200.80px;height:1.00px;background:#a6a6a6;"></div>
<div class="r" style="left:285.20px;top:425.50px;width:200.80px;height:1.00px;background:#ffffff;"></div>
<div class="t" style="left:289.20px;top:434.35px;font-size:14.00px;line-height:14.00px;color:#000000;font-family:'Liberation Sans', sans-serif;">Comercial</div>
<div class="r" style="left:289.20px;top:447.80px;width:10.11px;height:1.10px;background:#000000;"></div>
<div class="r" style="left:285.20px;top:455.50px;width:200.80px;height:1.00px;background:#a6a6a6;"></div>
<div class="r" style="left:285.20px;top:456.50px;width:200.80px;height:1.00px;background:#ffffff;"></div>
<div class="t" style="left:289.20px;top:464.55px;font-size:14.00px;line-height:14.00px;color:#000000;font-family:'Liberation Sans', sans-serif;">Configurações fiscais</div>
<div class="r" style="left:314.88px;top:478.00px;width:3.89px;height:1.10px;background:#000000;"></div>
<svg style="left:493px;top:466.60px" width="6" height="9" viewBox="0 0 6 9"><path d="M0.3 0 L5 4.5 L0.3 9 Z" fill="#000000"/></svg>
<div class="t" style="left:289.20px;top:487.15px;font-size:14.00px;line-height:14.00px;color:#ffffff;font-family:'Liberation Sans', sans-serif;">Configurações PDV</div>
<div class="r" style="left:321.88px;top:500.60px;width:7.79px;height:1.10px;background:#ffffff;"></div>
<svg style="left:493px;top:489.20px" width="6" height="9" viewBox="0 0 6 9"><path d="M0.3 0 L5 4.5 L0.3 9 Z" fill="#ffffff"/></svg>
<div class="r" style="left:285.20px;top:509.50px;width:200.80px;height:1.00px;background:#a6a6a6;"></div>
<div class="r" style="left:285.20px;top:510.50px;width:200.80px;height:1.00px;background:#ffffff;"></div>
<div class="t" style="left:289.20px;top:518.45px;font-size:14.00px;line-height:14.00px;color:#000000;font-family:'Liberation Sans', sans-serif;">Restrição comercial</div>
<div class="r" style="left:289.20px;top:531.90px;width:10.11px;height:1.10px;background:#000000;"></div>
<div class="t" style="left:289.20px;top:541.15px;font-size:14.00px;line-height:14.00px;color:#000000;font-family:'Liberation Sans', sans-serif;">Código Agrupado</div>
<div class="r" style="left:346.79px;top:554.60px;width:7.79px;height:1.10px;background:#000000;"></div>
<div class="t" style="left:289.20px;top:563.75px;font-size:14.00px;line-height:14.00px;color:#000000;font-family:'Liberation Sans', sans-serif;">Dados bancários/favorecidos</div>
<div class="r" style="left:333.56px;top:577.20px;width:7.79px;height:1.10px;background:#000000;"></div>
<div class="t" style="left:289.20px;top:586.05px;font-size:14.00px;line-height:14.00px;color:#000000;font-family:'Liberation Sans', sans-serif;">Impostos</div>
<div class="r" style="left:304.75px;top:599.50px;width:7.79px;height:1.10px;background:#000000;"></div>
<div class="r" style="left:285.20px;top:608.20px;width:200.80px;height:1.00px;background:#a6a6a6;"></div>
<div class="r" style="left:285.20px;top:609.20px;width:200.80px;height:1.00px;background:#ffffff;"></div>
<div class="t" style="left:289.20px;top:617.15px;font-size:14.00px;line-height:14.00px;color:#000000;font-family:'Liberation Sans', sans-serif;">Análise Crédito</div>
<div class="r" style="left:314.11px;top:630.60px;width:3.11px;height:1.10px;background:#000000;"></div>
<div class="r" style="left:285.20px;top:638.50px;width:200.80px;height:1.00px;background:#a6a6a6;"></div>
<div class="r" style="left:285.20px;top:639.50px;width:200.80px;height:1.00px;background:#ffffff;"></div>
<div class="t" style="left:289.20px;top:648.15px;font-size:14.00px;line-height:14.00px;color:#000000;font-family:'Liberation Sans', sans-serif;">Mostrar contatos</div>
<div class="r" style="left:289.20px;top:661.60px;width:11.66px;height:1.10px;background:#000000;"></div>
<div class="r" style="left:285.20px;top:669.70px;width:200.80px;height:1.00px;background:#a6a6a6;"></div>
<div class="r" style="left:285.20px;top:670.70px;width:200.80px;height:1.00px;background:#ffffff;"></div>
<div class="t" style="left:289.20px;top:679.65px;font-size:14.00px;line-height:14.00px;color:#000000;font-family:'Liberation Sans', sans-serif;">Relativo ao</div>
<svg style="left:493px;top:681.70px" width="6" height="9" viewBox="0 0 6 9"><path d="M0.3 0 L5 4.5 L0.3 9 Z" fill="#000000"/></svg>
<div class="t" style="left:289.20px;top:702.25px;font-size:14.00px;line-height:14.00px;color:#000000;font-family:'Liberation Sans', sans-serif;">Propriedades (CTRL+T)</div>
<div class="r" style="left:503.00px;top:479.30px;width:226.00px;height:40.20px;background:#f0f0f0;"></div>
<div class="r" style="left:503.00px;top:479.30px;width:226.00px;height:1.00px;background:#e3e3e3;"></div>
<div class="r" style="left:503.00px;top:479.30px;width:1.00px;height:40.20px;background:#e3e3e3;"></div>
<div class="r" style="left:504.00px;top:480.30px;width:223.50px;height:1.00px;background:#ffffff;"></div>
<div class="r" style="left:504.00px;top:480.30px;width:1.00px;height:37.70px;background:#ffffff;"></div>
<div class="r" style="left:727.20px;top:479.30px;width:1.80px;height:40.20px;background:#646464;"></div>
<div class="r" style="left:503.00px;top:517.70px;width:226.00px;height:1.80px;background:#646464;"></div>
<div class="r" style="left:506.00px;top:483.00px;width:217.50px;height:21.70px;background:#0078d7;"></div>
<div class="t" style="left:530.70px;top:487.15px;font-size:14.00px;line-height:14.00px;color:#ffffff;letter-spacing:0.168px;font-family:'Liberation Sans', sans-serif;">Valor limite fin. pendente</div>
</body></html>
